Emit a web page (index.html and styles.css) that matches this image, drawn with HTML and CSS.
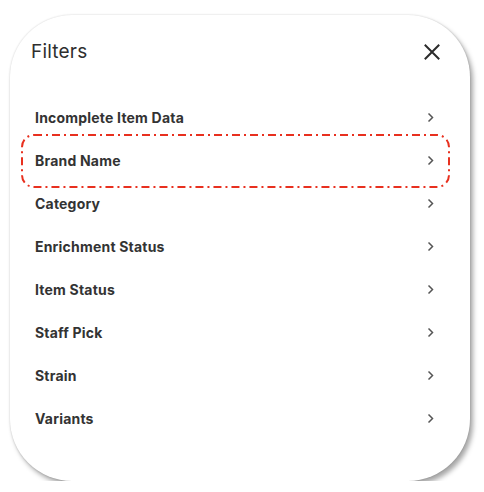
FILE: index.html
```html
<!DOCTYPE html>
<html>
<head>
<meta charset="utf-8">
<link rel="stylesheet" href="styles.css">
</head>
<body>
<div class="card">
  <div class="header">
    <h1 class="title">Filters</h1>
    <button class="close" aria-label="Close">
      <svg width="16" height="16" viewBox="0 0 16 16"><path d="M1.5 1.5 L14.5 14.5 M14.5 1.5 L1.5 14.5" stroke="#2b2b2b" stroke-width="2" fill="none" stroke-linecap="square"/></svg>
    </button>
  </div>
  <ul class="list">
    <li class="row"><span>Incomplete Item Data</span><svg class="chev" width="7" height="11" viewBox="0 0 7 11"><path d="M1.5 1.5 L5.5 5.5 L1.5 9.5" stroke="#555" stroke-width="1.5" fill="none"/></svg></li>
    <li class="row highlight"><span>Brand Name</span><svg class="chev" width="7" height="11" viewBox="0 0 7 11"><path d="M1.5 1.5 L5.5 5.5 L1.5 9.5" stroke="#555" stroke-width="1.5" fill="none"/></svg>
      <svg class="outline" width="429" height="54" viewBox="0 0 429 54"><rect x="1" y="1" width="427" height="52" rx="12" ry="12" fill="none" stroke="#e8301f" stroke-width="2" stroke-dasharray="8 4 2 4"/></svg>
    </li>
    <li class="row"><span>Category</span><svg class="chev" width="7" height="11" viewBox="0 0 7 11"><path d="M1.5 1.5 L5.5 5.5 L1.5 9.5" stroke="#555" stroke-width="1.5" fill="none"/></svg></li>
    <li class="row"><span>Enrichment Status</span><svg class="chev" width="7" height="11" viewBox="0 0 7 11"><path d="M1.5 1.5 L5.5 5.5 L1.5 9.5" stroke="#555" stroke-width="1.5" fill="none"/></svg></li>
    <li class="row"><span>Item Status</span><svg class="chev" width="7" height="11" viewBox="0 0 7 11"><path d="M1.5 1.5 L5.5 5.5 L1.5 9.5" stroke="#555" stroke-width="1.5" fill="none"/></svg></li>
    <li class="row"><span>Staff Pick</span><svg class="chev" width="7" height="11" viewBox="0 0 7 11"><path d="M1.5 1.5 L5.5 5.5 L1.5 9.5" stroke="#555" stroke-width="1.5" fill="none"/></svg></li>
    <li class="row"><span>Strain</span><svg class="chev" width="7" height="11" viewBox="0 0 7 11"><path d="M1.5 1.5 L5.5 5.5 L1.5 9.5" stroke="#555" stroke-width="1.5" fill="none"/></svg></li>
    <li class="row"><span>Variants</span><svg class="chev" width="7" height="11" viewBox="0 0 7 11"><path d="M1.5 1.5 L5.5 5.5 L1.5 9.5" stroke="#555" stroke-width="1.5" fill="none"/></svg></li>
  </ul>
</div>
</body>
</html>
```
FILE: styles.css
```css
html, body {
  margin: 0;
  padding: 0;
  background: #ffffff;
}
body {
  font-family: Inter, "Liberation Sans", sans-serif;
  padding: 15px 14px 0 10px;
}
.card {
  box-sizing: border-box;
  width: 460px;
  height: 466px;
  background: #fff;
  border-radius: 62px;
  box-shadow: 3px 4px 5px rgba(0,0,0,0.35), 0 0 2px rgba(0,0,0,0.18);
  padding: 25px 0 0 0;
}
.header {
  display: flex;
  justify-content: space-between;
  align-items: center;
  padding: 0 30px 0 21px;
  height: 24px;
}
.title {
  margin: 0;
  font-size: 19px;
  font-weight: 400;
  color: #2e2e2e;
  line-height: 24px;
  letter-spacing: 0.2px;
}
.close {
  border: 0;
  background: none;
  padding: 0;
  width: 16px;
  height: 16px;
  display: block;
}
.close svg { display: block; }
.list {
  list-style: none;
  margin: 32px 0 0 0;
  padding: 0;
}
.row {
  position: relative;
  height: 43px;
  display: flex;
  align-items: center;
  justify-content: space-between;
  padding: 0 36px 0 25px;
  font-size: 14px;
  font-weight: 700;
  letter-spacing: 0.2px;
  color: #333;
}
.chev { display: block; }
.outline {
  position: absolute;
  left: 11px;
  top: -5px;
}
```
